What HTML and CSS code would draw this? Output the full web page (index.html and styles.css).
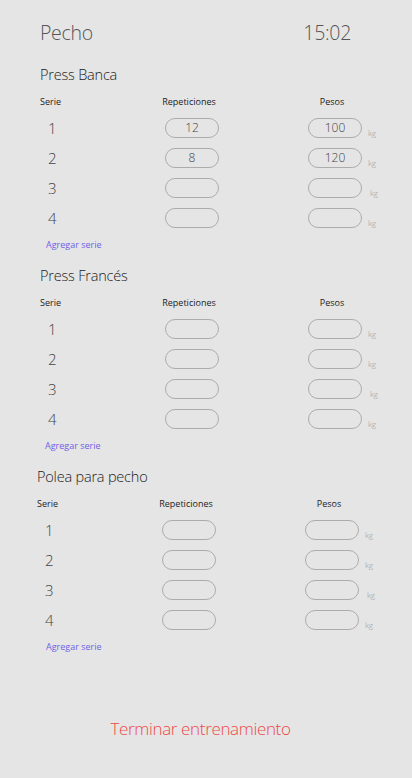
FILE: index.html
```html
<!DOCTYPE html>
<html lang="es">
<head>
<meta charset="utf-8">
<title>Pecho</title>
<link rel="stylesheet" href="styles.css">
</head>
<body>
<div class="page">
  <header class="top">
    <h1 class="top-title">Pecho</h1>
    <span class="top-time">15:02</span>
  </header>

  <section class="exercise">
    <h2 class="ex-title">Press Banca</h2>
    <div class="grid">
      <div class="hd hd-serie">Serie</div>
      <div class="hd hd-col">Repeticiones</div>
      <div class="hd hd-col">Pesos</div>
      <div class="hd"></div>

      <div class="num">1</div><div class="field">12</div><div class="field">100</div><div class="kg">kg</div>
      <div class="num">2</div><div class="field">8</div><div class="field">120</div><div class="kg">kg</div>
      <div class="num">3</div><div class="field"></div><div class="field"></div><div class="kg kg-wide">kg</div>
      <div class="num">4</div><div class="field"></div><div class="field"></div><div class="kg">kg</div>
    </div>
    <a class="add add-a">Agregar serie</a>
  </section>

  <section class="exercise">
    <h2 class="ex-title">Press Francés</h2>
    <div class="grid">
      <div class="hd hd-serie">Serie</div>
      <div class="hd hd-col">Repeticiones</div>
      <div class="hd hd-col">Pesos</div>
      <div class="hd"></div>

      <div class="num">1</div><div class="field"></div><div class="field"></div><div class="kg">kg</div>
      <div class="num">2</div><div class="field"></div><div class="field"></div><div class="kg">kg</div>
      <div class="num">3</div><div class="field"></div><div class="field"></div><div class="kg kg-wide">kg</div>
      <div class="num">4</div><div class="field"></div><div class="field"></div><div class="kg">kg</div>
    </div>
    <a class="add add-b">Agregar serie</a>
  </section>

  <section class="exercise exercise-shift">
    <h2 class="ex-title">Polea para pecho</h2>
    <div class="grid">
      <div class="hd hd-serie">Serie</div>
      <div class="hd hd-col">Repeticiones</div>
      <div class="hd hd-col">Pesos</div>
      <div class="hd"></div>

      <div class="num">1</div><div class="field"></div><div class="field"></div><div class="kg">kg</div>
      <div class="num">2</div><div class="field"></div><div class="field"></div><div class="kg">kg</div>
      <div class="num">3</div><div class="field"></div><div class="field"></div><div class="kg kg-wide">kg</div>
      <div class="num">4</div><div class="field"></div><div class="field"></div><div class="kg">kg</div>
    </div>
    <a class="add add-c">Agregar serie</a>
  </section>

  <footer class="finish">
    <a class="finish-btn">Terminar entrenamiento</a>
  </footer>
</div>
</body>
</html>
```

FILE: styles.css
```css
* { box-sizing: border-box; }

html, body {
  margin: 0;
  padding: 0;
  background: #e5e5e5;
}

body {
  font-family: "Open Sans", "Liberation Sans", sans-serif;
  font-weight: 300;
  color: #333;
}

.page {
  min-height: 778px;
  display: flex;
  flex-direction: column;
  padding: 21px 0 38px 40px;
}

.top {
  display: flex;
  justify-content: space-between;
  align-items: baseline;
  padding-right: 61px;
}

.top-title,
.top-time {
  margin: 0;
  font-size: 19.5px;
  line-height: 24px;
  font-weight: 300;
  letter-spacing: -0.3px;
  color: #555;
}

.exercise {
  margin-top: 16px;
}

.exercise:first-of-type {
  margin-top: 21px;
}

.exercise-shift {
  margin-left: -3px;
}

.ex-title {
  margin: 0;
  font-size: 14.5px;
  line-height: 18px;
  font-weight: 300;
  letter-spacing: -0.2px;
  color: #222;
}

.grid {
  margin-top: 12px;
  display: grid;
  grid-template-columns: 125px 143px 54px auto;
  row-gap: 10px;
  align-items: center;
}

.hd {
  font-size: 9px;
  line-height: 12px;
  font-weight: 400;
  color: #222;
  white-space: nowrap;
}

.hd-col {
  width: 54px;
  display: flex;
  justify-content: center;
  margin-left: -3px;
}

.num {
  padding-left: 8px;
  font-size: 15px;
  line-height: 20px;
  color: #444;
}

.field {
  width: 54px;
  height: 20px;
  border: 1px solid #acacac;
  border-radius: 10px;
  display: flex;
  align-items: center;
  justify-content: center;
  font-size: 12px;
  line-height: 18px;
  color: #444;
}

.kg {
  align-self: end;
  padding-left: 6px;
  font-size: 8px;
  line-height: 10px;
  color: #999;
}

.kg-wide {
  padding-left: 8px;
}

.add {
  display: block;
  margin-top: 11px;
  font-size: 9px;
  line-height: 12px;
  font-weight: 400;
  color: #6f5fe6;
  cursor: pointer;
}

.add-a { padding-left: 6px; }
.add-b { padding-left: 5px; }
.add-c { padding-left: 9px; }

.finish {
  margin-top: auto;
  text-align: center;
  padding-right: 51px;
}

.finish-btn {
  font-size: 17px;
  line-height: 20px;
  letter-spacing: -0.35px;
  color: #f04848;
  cursor: pointer;
}
```
